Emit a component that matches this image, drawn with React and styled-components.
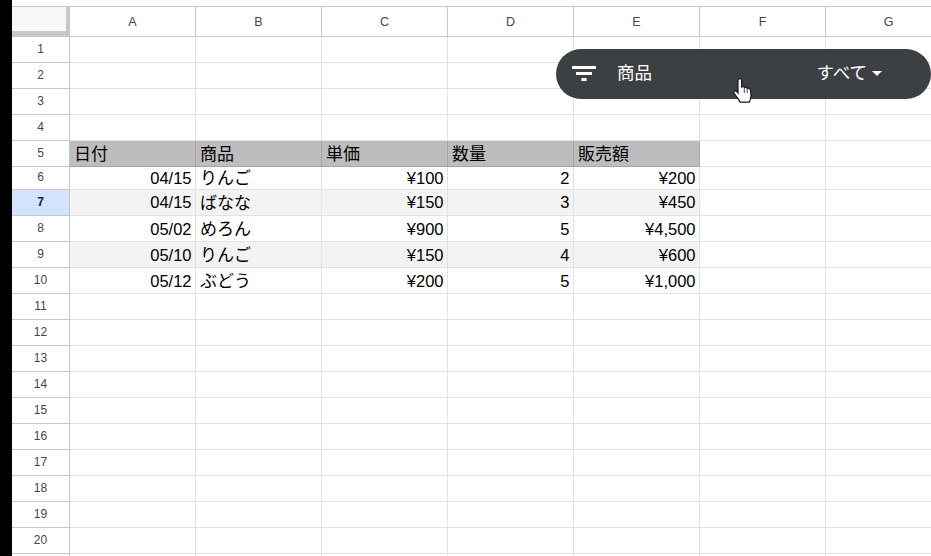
import React from "react";
import styled, { createGlobalStyle } from "styled-components";

const COLUMNS = ["A", "B", "C", "D", "E", "F", "G"];

const TABLE = {
  5: ["日付", "商品", "単価", "数量", "販売額"],
  6: ["04/15", "りんご", "¥100", "2", "¥200"],
  7: ["04/15", "ばなな", "¥150", "3", "¥450"],
  8: ["05/02", "めろん", "¥900", "5", "¥4,500"],
  9: ["05/10", "りんご", "¥150", "4", "¥600"],
  10: ["05/12", "ぶどう", "¥200", "5", "¥1,000"],
};

const App = () => {
  const rows = Array.from({ length: 21 }, (_, i) => i + 1);

  return (
    <Page>
      <GlobalStyle />
      <Rail />
      <Sheet>
        <HeaderRow>
          <Corner />
          {COLUMNS.map((col) => (
            <ColHead key={col}>{col}</ColHead>
          ))}
        </HeaderRow>
        {rows.map((row) => {
          const values = TABLE[row] || [];
          const isTitle = row === 5;
          const isData = row > 5 && row <= 10;
          return (
            <Row key={row} $short={row === 6}>
              <RowHead $active={row === 7}>{row < 21 ? row : ""}</RowHead>
              {COLUMNS.map((col, i) => (
                <Cell
                  key={col}
                  $title={isTitle && i < 5}
                  $striped={isData && row % 2 === 1 && i < 5}
                  $right={isData && i !== 1}
                  $kana={isTitle || i === 1}
                  $low={row > 7}
                >
                  {values[i]}
                </Cell>
              ))}
            </Row>
          );
        })}
        <FilterPill>
          <FilterIcon viewBox="0 0 24 15">
            <rect x="0" y="0" width="24" height="3" rx="0.5" />
            <rect x="4" y="6" width="16" height="3" />
            <rect x="9.500" y="12" width="5" height="3" />
          </FilterIcon>
          <FilterName>商品</FilterName>
          <FilterValue>
            すべて
            <Caret viewBox="0 0 10 5">
              <path d="M0 0 H10 L5 5 Z" />
            </Caret>
          </FilterValue>
        </FilterPill>
        <HandCursor viewBox="0 0 19 25">
          <path d="M5 2.200Q5 .6 6.800 .6Q8.600 .6 8.600 2.200V9Q10.500 8 11.500 9.500Q13 8.700 14.300 10.300Q16.200 9.800 17.500 11.800L18 18Q17.800 21 16.300 24.200H7Q5.800 21.200 3.800 19L1 15Q.4 13.500 1.800 13Q3.300 12.600 5 15Z" />
          <path className="line" d="M11.300 10V15M14.200 10.500V15" />
        </HandCursor>
      </Sheet>
    </Page>
  );
};

const GlobalStyle = createGlobalStyle`
  html, body {
    margin: 0;
    padding: 0;
    background: #fff;
    overflow: hidden;
  }
`;

const Page = styled.div`
  display: flex;
  width: 931px;
  height: 556px;
  overflow: hidden;
  font-family: "Liberation Sans", "Noto Sans CJK JP", sans-serif;
`;

const Rail = styled.div`
  flex: 0 0 12px;
  background: #000;
`;

const Sheet = styled.div`
  position: relative;
  flex: 1;
  min-width: 0;
  padding-top: 6px;
  overflow: hidden;
`;

const HeaderRow = styled.div`
  display: flex;
  height: 31px;
  box-sizing: border-box;
  border-top: 1px solid #c7c7c7;
  border-bottom: 1px solid #c7c7c7;
`;

const Corner = styled.div`
  flex: 0 0 58px;
  box-sizing: border-box;
  background: #f8f8f8;
  border-right: 4px solid #c7c9c7;
  border-bottom: 5px solid #c7c9c7;
`;

const ColHead = styled.div`
  flex: 0 0 126px;
  box-sizing: border-box;
  display: flex;
  align-items: center;
  justify-content: center;
  border-right: 1px solid #c7c7c7;
  font-size: 12.5px;
  color: #444746;
`;

const Row = styled.div`
  display: flex;
  height: ${(props) => (props.$short ? "23px" : "26px")};
`;

const RowHead = styled.div`
  flex: 0 0 58px;
  box-sizing: border-box;
  display: flex;
  align-items: center;
  justify-content: center;
  padding-bottom: 2px;
  border-right: 1px solid #c7c7c7;
  border-bottom: 1px solid #c7c7c7;
  background: ${(props) => (props.$active ? "#d3e3fd" : "#fff")};
  color: ${(props) => (props.$active ? "#0b1f3a" : "#444746")};
  font-size: 12px;
  font-weight: ${(props) => (props.$active ? 700 : 400)};
`;

const Cell = styled.div`
  flex: 0 0 126px;
  box-sizing: border-box;
  display: flex;
  align-items: center;
  justify-content: ${(props) => (props.$right ? "flex-end" : "flex-start")};
  padding: ${(props) => (props.$kana ? "0 4px 3px 4px" : props.$low ? "2px 3.5px 0" : "0 3.5px")};
  white-space: nowrap;
  font-size: ${(props) => (props.$kana ? "17px" : "16.5px")};
  color: #000;
  border-right: 1px solid ${(props) => (props.$title ? "#a6a6a6" : "#e2e2e2")};
  border-bottom: 1px solid ${(props) => (props.$title ? "#a6a6a6" : "#e2e2e2")};
  background: ${(props) =>
    props.$title ? "#bdbdbd" : props.$striped ? "#f3f3f3" : "#fff"};
`;

const FilterPill = styled.div`
  position: absolute;
  top: 49px;
  left: 544px;
  width: 375px;
  height: 50px;
  box-sizing: border-box;
  display: flex;
  align-items: center;
  padding: 0 49px 0 16px;
  border-radius: 25px;
  background: #3c4043;
  color: #fff;
`;

const FilterIcon = styled.svg`
  flex: 0 0 24px;
  width: 24px;
  height: 15px;
  margin-top: -2px;
  fill: #fff;
`;

const FilterName = styled.span`
  margin: -5px 0 0 21px;
  font-size: 17.5px;
`;

const FilterValue = styled.span`
  margin: -5px 0 0 auto;
  display: flex;
  align-items: center;
  font-size: 17.5px;
`;

const Caret = styled.svg`
  width: 10px;
  height: 5px;
  margin: 3px 0 0 5px;
  fill: #fff;
`;

const HandCursor = styled.svg`
  position: absolute;
  top: 78px;
  left: 721px;
  width: 19px;
  height: 25px;
  fill: #fff;
  stroke: #1b1330;
  stroke-width: 1.2;

  .line {
    fill: none;
    stroke-width: 0.8;
  }
`;

export default App;
